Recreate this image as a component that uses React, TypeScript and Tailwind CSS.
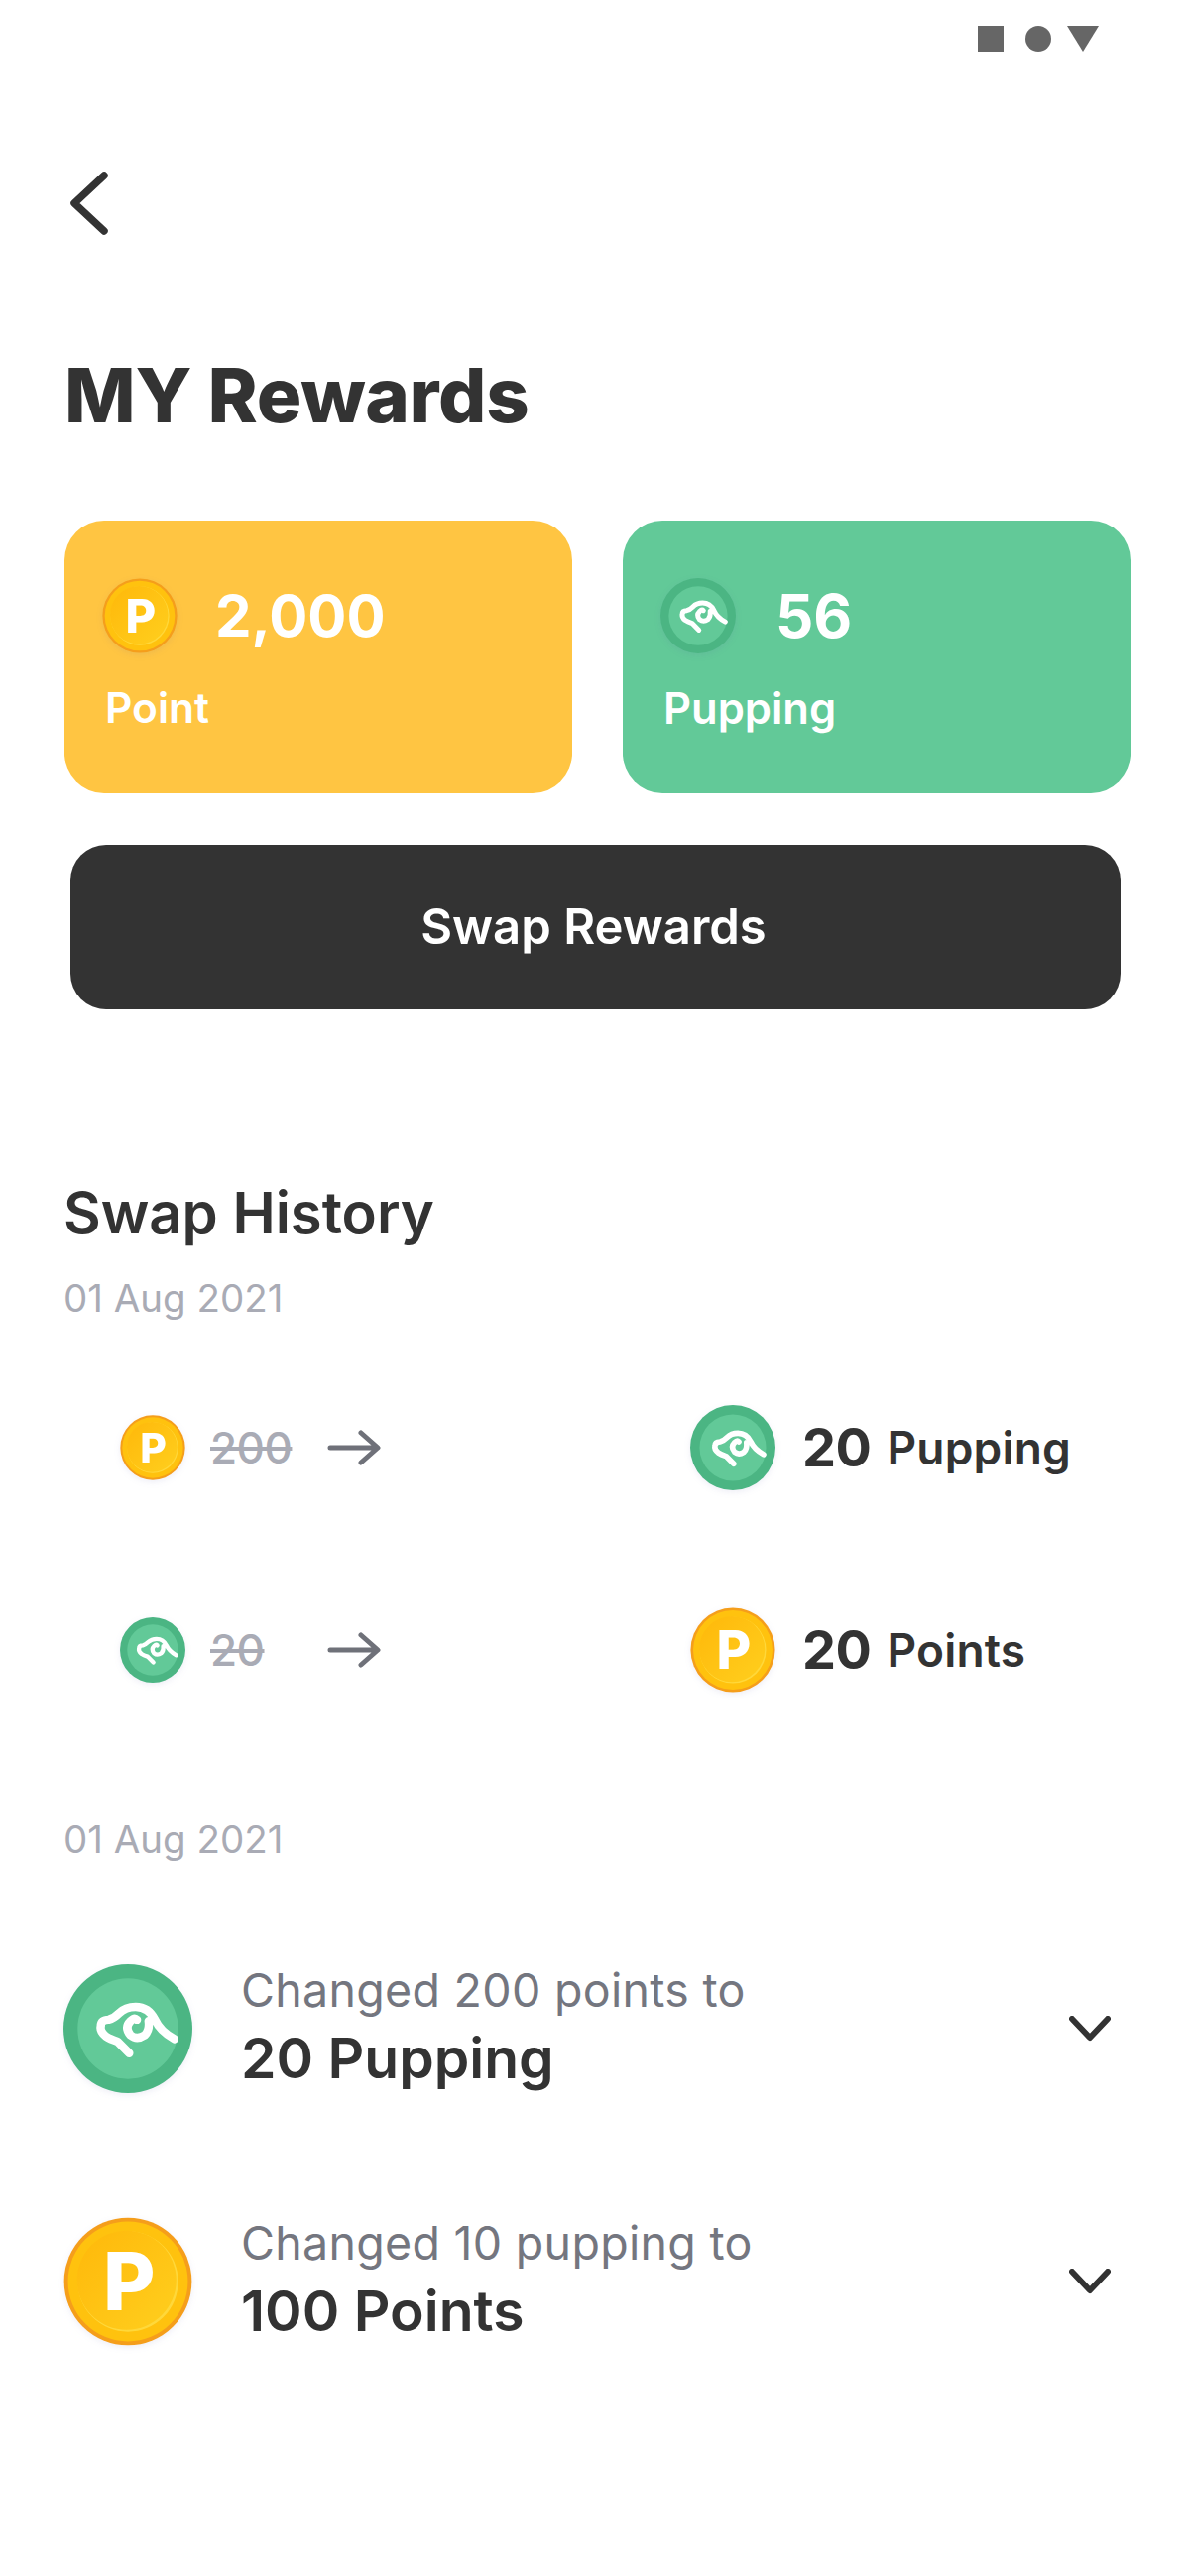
const FONT = "font-['Inter','Liberation_Sans',sans-serif]";

function PointCoin({ className }: { className: string }) {
  return (
    <svg viewBox="0 0 100 100" className={`${className} drop-shadow-[0_2px_3px_rgba(90,90,170,0.1)]`}>
      <defs>
        <linearGradient id="coinFace" x1="0" y1="0" x2="1" y2="1">
          <stop offset="0" stopColor="#FFB80A" />
          <stop offset="1" stopColor="#FFCF1E" />
        </linearGradient>
      </defs>
      <circle cx="50" cy="50" r="49.5" fill="#F59E1B" />
      <circle cx="50" cy="50" r="46.5" fill="#FFC20E" />
      <circle cx="50" cy="50" r="39" fill="#FFD83A" />
      <circle cx="49" cy="49" r="38.5" fill="url(#coinFace)" />
      <text
        x="51"
        y="72.5"
        textAnchor="middle"
        fill="#fff"
        fontSize="62"
        fontWeight="800"
        fontFamily="Inter, sans-serif"
      >
        P
      </text>
    </svg>
  );
}

function PuppingCoin({ className }: { className: string }) {
  return (
    <svg viewBox="0 0 100 100" className={`${className} drop-shadow-[0_2px_3px_rgba(90,90,170,0.1)]`}>
      <circle cx="50" cy="50" r="50" fill="#4BB583" />
      <circle cx="50" cy="50" r="39" fill="#62C998" />
      <path
        d="M51 69 L42 60 Q36 58 33 56 Q28 52 29 48 Q29 43 35 43 Q39 42 43 38 Q48 33 56 33 Q66 33 71 43 Q75 52 86 58 M66 44 Q67 51 63 55 Q57 59 52 55 Q47 49 52 44 Q55 41 57 43"
        fill="none"
        stroke="#fff"
        strokeWidth="6.5"
        strokeLinecap="round"
        strokeLinejoin="round"
      />
    </svg>
  );
}

function Arrow() {
  return (
    <svg viewBox="0 0 54 36" className="w-[54px] h-[36px]" fill="none" stroke="#6F7179" strokeWidth="5" strokeLinecap="round" strokeLinejoin="round">
      <path d="M3 18 H50 M34 3 L51 18 L34 33" />
    </svg>
  );
}

function Chevron() {
  return (
    <svg viewBox="0 0 42 26" className="w-[42px] h-[26px] mr-[20px]" fill="none" stroke="#333333" strokeWidth="6" strokeLinecap="round" strokeLinejoin="round">
      <path d="M3 3 L21 22 L39 3" />
    </svg>
  );
}

function SwapRow({ coin, from, to, unit, toCoin }: { coin: React.ReactNode; from: string; to: string; unit: string; toCoin: React.ReactNode }) {
  return (
    <div className="flex items-center h-[90px]">
      <div className="w-[66px] ml-[56px]">{coin}</div>
      <span className="w-[118px] ml-[25px] text-[44px] leading-none font-medium text-[#A9ABB5] tracking-[-0.5px]">
        <span className="line-through">{from}</span>
      </span>
      <Arrow />
      <div className="ml-[312px] w-[86px]">{toCoin}</div>
      <span className="ml-[27px] text-[54px] leading-none font-bold text-[#333333] tracking-[-0.5px]">{to}</span>
      <span className="ml-[16px] text-[46px] leading-none font-semibold text-[#333333] tracking-[0.2px]">{unit}</span>
    </div>
  );
}

function HistoryItem({ coin, line, value }: { coin: React.ReactNode; line: string; value: string }) {
  return (
    <div className="flex items-center h-[130px]">
      {coin}
      <div className="ml-[49px] flex-1">
        <p className="text-[46.5px] leading-[60px] text-[#74767F] tracking-[0.3px] -mt-[4px]">{line}</p>
        <p className="mt-[3px] text-[57px] leading-[72px] font-semibold text-[#333333]">{value}</p>
      </div>
      <Chevron />
    </div>
  );
}

export default function App() {
  return (
    <div className={`${FONT} w-[1200px] h-[2598px] bg-white overflow-hidden`}>
      <div className="flex items-center justify-end h-[78px] pr-[92px]">
        <div className="w-[26px] h-[26px] bg-[#666666]" />
        <div className="w-[26px] h-[26px] rounded-full bg-[#666666] ml-[22px] mr-[16px]" />
        <svg viewBox="0 0 32 26" className="w-[32px] h-[26px]">
          <path d="M0 0 H32 L16 26 Z" fill="#666666" />
        </svg>
      </div>

      <div className="pl-[65px] pr-[60px]">
        <svg viewBox="0 0 44 70" className="w-[44px] h-[70px] mt-[92px] ml-[3px]" fill="none" stroke="#333333" strokeWidth="7.5" strokeLinecap="round" strokeLinejoin="round">
          <path d="M37 7 L7 35 L37 63" />
        </svg>

        <h1 className="mt-[112px] text-[76px] leading-[92px] font-extrabold text-[#333333] tracking-[-0.3px]">MY Rewards</h1>

        <div className="mt-[81px] flex gap-[51px]">
          <div className="w-[512px] h-[275px] rounded-[40px] bg-[#FFC542] pl-[38px] pt-[58px] text-white">
            <div className="flex items-center h-[76px]">
              <PointCoin className="w-[76px] h-[76px]" />
              <span className="ml-[38px] text-[58px] leading-none font-bold">2,000</span>
            </div>
            <p className="mt-[27px] ml-[3px] text-[42.5px] leading-[56px] font-semibold">Point</p>
          </div>
          <div className="w-[512px] h-[275px] rounded-[40px] bg-[#62C998] pl-[38px] pt-[58px] text-white">
            <div className="flex items-center h-[76px]">
              <PuppingCoin className="w-[76px] h-[76px]" />
              <span className="ml-[40px] text-[60px] leading-none font-bold">56</span>
            </div>
            <p className="mt-[27px] ml-[3px] text-[43.5px] leading-[56px] font-semibold">Pupping</p>
          </div>
        </div>

        <button className="mt-[52px] ml-[6px] w-[1059px] h-[166px] rounded-[36px] bg-[#333333] text-white text-[49px] font-semibold pr-[4px]">
          Swap Rewards
        </button>

        <h2 className="mt-[170px] -ml-[1px] text-[58px] leading-[70px] font-semibold text-[#333333]">Swap History</h2>
        <p className="mt-[23px] -ml-[1px] text-[38.5px] leading-[56px] text-[#A9ABB5]">01 Aug 2021</p>

        <div className="mt-[78px] flex flex-col gap-[114px]">
          <SwapRow coin={<PointCoin className="w-[66px] h-[66px]" />} from="200" to="20" unit="Pupping" toCoin={<PuppingCoin className="w-[86px] h-[86px]" />} />
          <SwapRow coin={<PuppingCoin className="w-[66px] h-[66px]" />} from="20" to="20" unit="Points" toCoin={<PointCoin className="w-[86px] h-[86px]" />} />
        </div>

        <p className="mt-[118px] -ml-[1px] text-[38.5px] leading-[56px] text-[#A9ABB5]">01 Aug 2021</p>

        <div className="mt-[98px] flex flex-col gap-[125px] -ml-[1px]">
          <HistoryItem coin={<PuppingCoin className="w-[130px] h-[130px]" />} line="Changed 200 points to" value="20 Pupping" />
          <HistoryItem coin={<PointCoin className="w-[130px] h-[130px]" />} line="Changed 10 pupping to" value="100 Points" />
        </div>
      </div>
    </div>
  );
}
